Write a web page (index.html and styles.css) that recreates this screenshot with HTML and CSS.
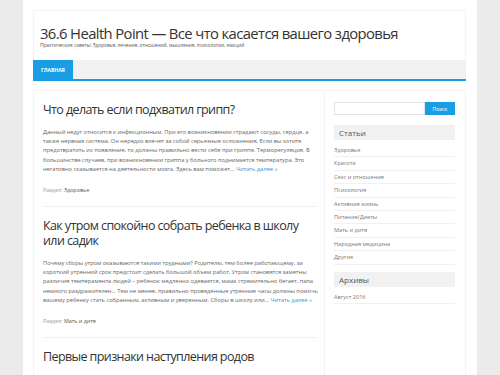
FILE: index.html
```html
<!DOCTYPE html>
<html lang="ru">
<head>
  <meta charset="UTF-8">
  <meta name="viewport" content="width=device-width, initial-scale=1.0">
  <title>36.6 Health Point</title>
  <link rel="stylesheet" href="styles.css">
</head>
<body>
<div class="page">
  <div class="header">
    <h1 class="site-title">36.6 Health Point — Все что касается вашего здоровья</h1>
    <div class="site-desc">Практические советы: Здоровья, лечения, отношений, мышления, психологии, эмоций</div>
  </div>

  <div class="nav">
    <a href="#" class="nav-item active">ГЛАВНАЯ</a>
  </div>

  <div class="content">
    <div class="main">
      <div class="post">
        <h2 class="post-title">Что делать если подхватил грипп?</h2>
        <p class="post-text">Данный недуг относится к инфекционным. При его возникновении страдают сосуды, сердце, а также нервная система. Он нередко влечет за собой серьезные осложнения. Если вы хотите предотвратить их появление, то должны правильно вести себя при гриппе. Терморегуляция. В большинстве случаев, при возникновении гриппа у больного поднимается температура. Это негативно сказывается на деятельности мозга. Здесь вам поможет… <a href="#" class="more">Читать далее »</a></p>
        <div class="post-meta">Раздел: <a href="#">Здоровье</a></div>
      </div>
      <div class="post">
        <h2 class="post-title">Как утром спокойно собрать ребенка в школу или садик</h2>
        <p class="post-text">Почему сборы утром оказываются такими трудными? Родителю, тем более работающему, за короткий утренний срок предстоит сделать большой объем работ. Утром становятся заметны различия темперамента людей – ребенок медленно одевается, мама стремительно бегает, папа немного раздражителен… Тем не менее, правильно проведенные утренние часы должны помочь вашему ребенку стать собранным, активным и уверенным. Сборы в школу или… <a href="#" class="more">Читать далее »</a></p>
        <div class="post-meta">Раздел: <a href="#">Мать и дитя</a></div>
      </div>
      <div class="post">
        <h2 class="post-title">Первые признаки наступления родов</h2>
        <p class="post-text">Некоторые беременные переживают, что наступление родов для них будет неожиданным. Однако организм заранее подает сигналы.</p>
      </div>
    </div>

    <div class="sidebar">
      <form class="search">
        <input type="text" class="search-input">
        <button type="button" class="search-btn">Поиск</button>
      </form>

      <div class="widget">
        <h3 class="widget-title">Статьи</h3>
        <ul class="widget-list">
          <li><a href="#">Здоровье</a></li>
          <li><a href="#">Красота</a></li>
          <li><a href="#">Секс и отношения</a></li>
          <li><a href="#">Психология</a></li>
          <li><a href="#">Активная жизнь</a></li>
          <li><a href="#">Питание/Диеты</a></li>
          <li><a href="#">Мать и дитя</a></li>
          <li><a href="#">Народная медицина</a></li>
          <li><a href="#">Другие</a></li>
        </ul>
      </div>

      <div class="widget">
        <h3 class="widget-title">Архивы</h3>
        <ul class="widget-list">
          <li><a href="#">Август 2016</a></li>
        </ul>
      </div>
    </div>
  </div>
</div>
</body>
</html>
```

FILE: styles.css
```css
body {
  margin: 0;
  background-color: #ebebeb;
  font-family: "Open Sans", "Noto Sans", sans-serif;
  color: #666;
}
a {
  text-decoration: none;
}
.page {
  width: 433px;
  height: 365px;
  margin: 0 auto;
  padding: 10px 11px 0 10px;
  background-color: #fff;
  overflow: hidden;
}
.header {
  height: 49px;
  border: 1px solid #f3f3f3;
  border-bottom: none;
  padding: 0 6px;
  overflow: hidden;
}
.site-title {
  margin: 12px 0 0;
  font-size: 14.8px;
  font-weight: normal;
  line-height: 20px;
  color: #333;
  letter-spacing: -0.6px;
  white-space: nowrap;
}
.site-desc {
  margin-top: -1px;
  font-size: 4.75px;
  line-height: 7px;
  color: #555;
}
.nav {
  display: flex;
  height: 19px;
  background-color: #f1f1f1;
  border-bottom: 2px solid #1a9ee3;
}
.nav-item {
  display: flex;
  align-items: center;
  padding: 0 8px;
  font-size: 5px;
  font-weight: bold;
  color: #fff;
}
.nav-item.active {
  background-color: #1a9ee3;
}
.content {
  display: flex;
  margin-top: 9px;
}
.main {
  flex: none;
  width: 275px;
  padding: 0 6px 0 9px;
  border: 1px solid #f3f3f3;
  border-bottom: none;
}
.post {
  padding: 11px 2px 12px 0;
  border-bottom: 1px solid #f1f1f1;
}
.post-title {
  margin: 0 0 10px;
  font-size: 12.5px;
  font-weight: normal;
  line-height: 15.5px;
  color: #333;
  letter-spacing: -0.6px;
}
.post-text {
  margin: 0 -2px 0 0;
  font-size: 5.75px;
  line-height: 9.4px;
  color: #666;
  letter-spacing: -0.03px;
}
.more {
  color: #1a9ee3;
}
.post-meta {
  margin-top: 11px;
  font-size: 5.4px;
  color: #999;
}
.post-meta a {
  color: #555;
}
.sidebar {
  flex: 1;
  min-width: 0;
  padding: 11px 10px 0 9px;
  border: 1px solid #f3f3f3;
  border-left: none;
  border-bottom: none;
}
.search {
  display: flex;
  margin: 0;
}
.search-input {
  flex: 1;
  width: 0;
  min-width: 0;
  height: 13px;
  box-sizing: border-box;
  margin: 0;
  border: 1px solid #e3e3e3;
  padding: 0;
}
.search-btn {
  width: 30px;
  height: 13px;
  margin: 0;
  border: none;
  padding: 0;
  background-color: #1a9ee3;
  color: #fff;
  font-family: "Open Sans", sans-serif;
  font-size: 5px;
}
.widget {
  margin-top: 10px;
}
.widget + .widget {
  margin-top: 7px;
}
.widget-title {
  margin: 0;
  height: 15px;
  padding: 0 5px;
  background-color: #f1f1f1;
  font-size: 8px;
  font-weight: normal;
  line-height: 15px;
  color: #555;
}
.widget-list {
  list-style: none;
  margin: 4px 0 0;
  padding: 0;
}
.widget-list li {
  height: 13.4px;
  border-bottom: 1px solid #f1f1f1;
  box-sizing: border-box;
  font-size: 5.6px;
  line-height: 12px;
}
.widget-list a {
  color: #777;
}
```
